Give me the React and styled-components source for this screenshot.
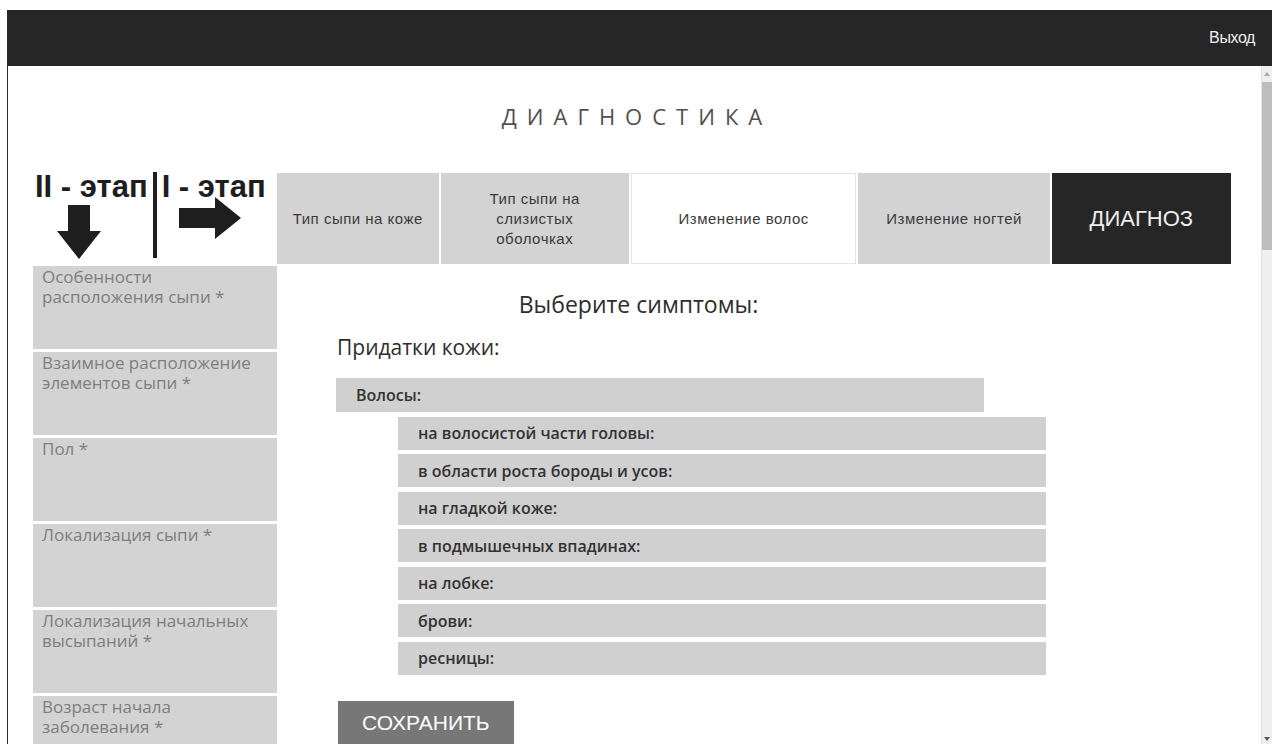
import React from "react";
import styled, { createGlobalStyle } from "styled-components";

const GlobalStyle = createGlobalStyle`
  html, body {
    margin: 0;
    padding: 0;
    background: #fff;
    overflow: hidden;
  }
  body {
    font-family: "Open Sans", "Liberation Sans", sans-serif;
  }
`;

//#region Frame
const Screen = styled.div`
  width: 1272px;
  height: 744px;
  box-sizing: border-box;
  padding: 10px 0 0 7px;
  display: flex;
  flex-direction: column;
  background: #fff;
  overflow: hidden;
`;

const TopBar = styled.header`
  height: 56px;
  flex-shrink: 0;
  background: #262626;
  display: flex;
  align-items: center;
  justify-content: flex-end;
  padding-right: 17px;
`;

const LogoutLink = styled.a`
  color: #f0f0f0;
  font: 16px "Liberation Sans", Arial, sans-serif;
  letter-spacing: -0.4px;
  text-decoration: none;
  cursor: pointer;
`;

const Window = styled.div`
  flex: 1;
  min-height: 0;
  display: flex;
  border-left: 1px solid #2a2a2a;
`;

const Viewport = styled.main`
  flex: 1;
  min-width: 0;
  overflow: hidden;
  padding: 0 30px 0 25px;
`;

const Scrollbar = styled.div`
  width: 10px;
  flex-shrink: 0;
  display: flex;
  flex-direction: column;
  align-items: center;
  background: #efefef;
  border-left: 1px solid #e2e2e2;
`;

const ScrollArrow = styled.div`
  width: 0;
  height: 0;
  margin: ${(p) => (p.$down ? "auto 0 3px" : "6px 0 0")};
  border-left: 3px solid transparent;
  border-right: 3px solid transparent;
  ${(p) =>
    p.$down ? "border-top: 4px solid #555;" : "border-bottom: 4px solid #aaa;"}
`;

const ScrollThumb = styled.div`
  width: 100%;
  height: 168px;
  margin-top: 6px;
  background: #bdbdbd;
`;
//#endregion

//#region Header blocks
const PageTitle = styled.h1`
  margin: 0;
  padding: 35px 0 0 10px;
  text-align: center;
  font: 400 22px/30px "Open Sans", sans-serif;
  letter-spacing: 10px;
  color: #505050;
`;

const Board = styled.section`
  margin-top: 42px;
  display: grid;
  grid-template-columns: 244px 1fr;
  grid-template-rows: 91px auto;
  row-gap: 2px;
`;

const Legend = styled.div`
  display: flex;
  align-items: flex-start;
  padding-left: 2px;
`;

const Stage = styled.div`
  display: flex;
  flex-direction: column;
  align-items: flex-start;
`;

const StageLabel = styled.span`
  font: 700 31px/28px "Liberation Sans", Arial, sans-serif;
  color: #1e1e1e;
  white-space: nowrap;
`;

const ArrowIcon = styled.svg`
  display: block;
  fill: #1e1e1e;
  margin: ${(p) => p.$margin};
`;

const StageDivider = styled.div`
  width: 4px;
  height: 86px;
  margin: -1px 5px 0 5px;
  background: #1e1e1e;
`;

const Tabs = styled.nav`
  display: flex;
  gap: 2px;
`;

const Tab = styled.div`
  flex: ${(p) => p.$grow} 1 0;
  box-sizing: border-box;
  display: flex;
  align-items: center;
  justify-content: center;
  text-align: center;
  background: ${(p) => (p.$dark ? "#262626" : p.$active ? "#fff" : "#d3d3d3")};
  border: 1px solid ${(p) => (p.$active ? "#e4e4e4" : "transparent")};
  color: ${(p) => (p.$dark ? "#eeeeee" : "#3a3a3a")};
  font: ${(p) => (p.$dark ? "22px" : "15px")} / 20px "Liberation Sans", Arial, sans-serif;
  letter-spacing: ${(p) => (p.$dark ? "0" : "0.5px")};
  cursor: pointer;
`;

const TabText = styled.span`
  max-width: ${(p) => p.$wrap || "none"};
`;
//#endregion

//#region Sidebar
const Sidebar = styled.aside`
  display: flex;
  flex-direction: column;
  gap: 3px;
`;

const Criterion = styled.div`
  height: 83px;
  flex-shrink: 0;
  box-sizing: border-box;
  padding: 1px 12px 0 9px;
  background: #d3d3d3;
  color: #7e7e7e;
  font: 400 17px/20px "Open Sans", sans-serif;
`;
//#endregion

//#region Symptoms panel
const Panel = styled.div`
  padding-left: 59px;
`;

const PanelTitle = styled.h2`
  margin: 23px 0 0 -59px;
  width: 723px;
  text-align: center;
  font: 400 23px/30px "Open Sans", sans-serif;
  color: #2d2d2d;
`;

const GroupTitle = styled.h3`
  margin: 14px 0 0 1px;
  font: 400 21px/28px "Open Sans", sans-serif;
  color: #2d2d2d;
`;

const SymptomList = styled.div`
  margin-top: 17px;
  display: flex;
  flex-direction: column;
  gap: 4.5px;
`;

const SymptomRow = styled.div`
  width: 648px;
  height: ${(p) => (p.$group ? "34px" : "33px")};
  box-sizing: border-box;
  margin-left: ${(p) => (p.$group ? "0" : "62px")};
  padding-left: 20px;
  display: flex;
  align-items: center;
  background: #d0d0d0;
  color: #333;
  font: 600 16px "Open Sans", sans-serif;
  cursor: pointer;
`;

const SaveButton = styled.button`
  margin: 26px 0 0 2px;
  height: 48px;
  padding: 0 24px 4px;
  border: none;
  background: #777;
  color: #fff;
  font: 21px "Liberation Sans", Arial, sans-serif;
  text-transform: uppercase;
  cursor: pointer;
`;
//#endregion

const tabs = [
  { label: "Тип сыпи на коже", grow: 162 },
  { label: "Тип сыпи на слизистых оболочках", grow: 189, wrap: "100px" },
  { label: "Изменение волос", grow: 227, active: true },
  { label: "Изменение ногтей", grow: 192 },
  { label: "ДИАГНОЗ", grow: 180, dark: true },
];

const criteria = [
  "Особенности расположения сыпи *",
  "Взаимное расположение элементов сыпи *",
  "Пол *",
  "Локализация сыпи *",
  "Локализация начальных высыпаний *",
  "Возраст начала заболевания *",
];

const hairSymptoms = [
  "на волосистой части головы:",
  "в области роста бороды и усов:",
  "на гладкой коже:",
  "в подмышечных впадинах:",
  "на лобке:",
  "брови:",
  "ресницы:",
];

const App = () => {
  return (
    <>
      <GlobalStyle />
      <Screen>
        <TopBar>
          <LogoutLink>Выход</LogoutLink>
        </TopBar>
        <Window>
          <Viewport>
            <PageTitle>ДИАГНОСТИКА</PageTitle>
            <Board>
              <Legend>
                <Stage>
                  <StageLabel>II - этап</StageLabel>
                  <ArrowIcon
                    width="44"
                    height="54"
                    viewBox="0 0 44 54"
                    $margin="4px 0 0 22px"
                  >
                    <path d="M11 0H33V26H44L22 54L0 26H11Z" />
                  </ArrowIcon>
                </Stage>
                <StageDivider />
                <Stage>
                  <StageLabel>I - этап</StageLabel>
                  <ArrowIcon
                    width="62"
                    height="42"
                    viewBox="0 0 62 42"
                    $margin="-4px 0 0 17px"
                  >
                    <path d="M0 11H36V0L62 21L36 42V31H0Z" />
                  </ArrowIcon>
                </Stage>
              </Legend>
              <Tabs>
                {tabs.map((t) => (
                  <Tab
                    key={t.label}
                    $grow={t.grow}
                    $active={t.active}
                    $dark={t.dark}
                  >
                    <TabText $wrap={t.wrap}>{t.label}</TabText>
                  </Tab>
                ))}
              </Tabs>
              <Sidebar>
                {criteria.map((c) => (
                  <Criterion key={c}>{c}</Criterion>
                ))}
              </Sidebar>
              <Panel>
                <PanelTitle>Выберите симптомы:</PanelTitle>
                <GroupTitle>Придатки кожи:</GroupTitle>
                <SymptomList>
                  <SymptomRow $group>Волосы:</SymptomRow>
                  {hairSymptoms.map((s) => (
                    <SymptomRow key={s}>{s}</SymptomRow>
                  ))}
                </SymptomList>
                <SaveButton>Сохранить</SaveButton>
              </Panel>
            </Board>
          </Viewport>
          <Scrollbar>
            <ScrollArrow />
            <ScrollThumb />
            <ScrollArrow $down />
          </Scrollbar>
        </Window>
      </Screen>
    </>
  );
};

export default App;
